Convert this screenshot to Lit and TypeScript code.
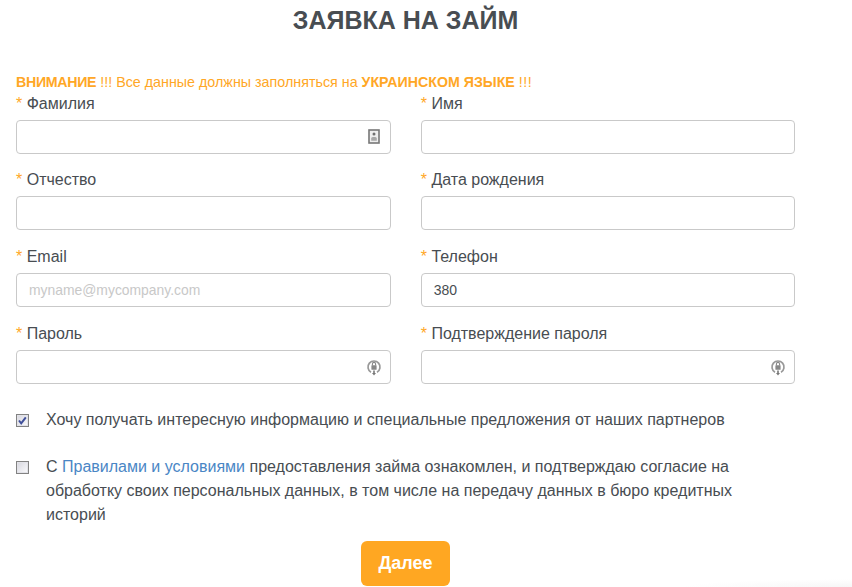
import { LitElement, html, css, svg } from "lit";
import { customElement } from "lit/decorators.js";

const cardIcon = svg`<svg class="ic card" width="12" height="15" viewBox="0 0 12 15"><rect x="1" y="1" width="10" height="13" fill="#eee" stroke="#777" stroke-width="1.6"/><circle cx="6" cy="5" r="1.5" fill="#6f6f6f"/><path d="M3.2 11.8V9.4C3.2 8.5 4.4 8 6 8s2.8.5 2.8 1.4v2.4z" fill="#a8a8a8"/></svg>`;
const lockIcon = svg`<svg class="ic" width="16" height="18" viewBox="0 0 16 18"><path d="M5 14.2A6 6 0 1 1 11 14.2" fill="none" stroke="#999" stroke-width="1.7"/><path d="M8 12.5v3.6" stroke="#777" stroke-width="1.6"/><path d="M6 15l2 2.4 2-2.4z" fill="#777"/><rect x="5.4" y="7.2" width="5.2" height="4.6" rx=".6" fill="#888"/><path d="M6.4 7.4V6a1.6 1.6 0 0 1 3.2 0v1.4" fill="none" stroke="#888" stroke-width="1.1"/></svg>`;

const fields = [
  { label: "Фамилия", icon: cardIcon },
  { label: "Имя" },
  { label: "Отчество" },
  { label: "Дата рождения" },
  { label: "Email", placeholder: "myname@mycompany.com" },
  { label: "Телефон", value: "380" },
  { label: "Пароль", icon: lockIcon },
  { label: "Подтверждение пароля", icon: lockIcon },
];

@customElement("app-root")
export class AppRoot extends LitElement {
  static styles = css`
    :host {
      display: block;
      width: 852px;
      height: 587px;
      overflow: hidden;
      background: #fff;
      font-family: "Liberation Sans", Arial, sans-serif;
      color: #484d52;
      font-size: 16px;
      position: relative;
    }
    .wrap {
      width: 779px;
      padding: 0 0 0 16px;
    }
    h1 {
      margin: 0;
      padding-top: 4px;
      height: 64px;
      box-sizing: border-box;
      font-size: 25px;
      line-height: 32px;
      font-weight: 700;
      text-align: center;
      color: #484d52;
    }
    .warn {
      margin: 0;
      padding-top: 8px;
      height: 33.6px;
      box-sizing: border-box;
      font-size: 14.3px;
      line-height: 20px;
      color: #ffa726;
    }
    .warn b { font-weight: 700; font-size: 14.2px; }
    .warn b.first { letter-spacing: -0.3px; }
    .warn .bang { letter-spacing: 0.5px; }
    .grid {
      display: grid;
      grid-template-columns: 375px 374.3px;
      column-gap: 29.7px;
      row-gap: 20.67px;
    }
    .field { display: block; }
    .lab {
      display: block;
      height: 20px;
      line-height: 20px;
      margin-bottom: 6px;
      margin-top: -4px;
      white-space: nowrap;
    }
    .star { color: #ffa726; }
    .box {
      box-sizing: border-box;
      height: 34px;
      border: 1px solid #c9c9c9;
      border-radius: 4px;
      background: #fff;
      display: flex;
      align-items: center;
      justify-content: space-between;
      padding: 0 8px 0 12px;
      font-size: 14px;
    }
    .ph { color: #c8c8c8; font-size: 13.9px; }
    .ic { display: block; margin-left: auto; }
    .card { margin-right: 2px; }
    .checks { padding-top: 24.4px; }
    .check {
      display: flex;
      align-items: flex-start;
      line-height: 24px;
      width: 730px;
    }
    .check + .check { margin-top: 23px; }
    .cb {
      flex: none;
      box-sizing: border-box;
      width: 13px;
      height: 13px;
      margin: 6px 17px 0 0;
      border: 1px solid #828282;
      background: linear-gradient(135deg, #d6d6de, #fbfbfd);
      box-shadow: inset 0 0 0 1px #e2e2e8;
      display: block;
    }
    a { color: #4a86c5; text-decoration: none; }
    .foot { display: flex; justify-content: center; padding-top: 14px; }
    .btn {
      width: 89px;
      height: 45px;
      box-sizing: border-box;
      border: 0;
      border-radius: 6px;
      background: #ffa722;
      color: #fff;
      font: 700 18px "Liberation Sans", Arial, sans-serif;
      padding: 0;
    }
    .shade {
      position: absolute;
      right: 0;
      bottom: 0;
      width: 170px;
      height: 8px;
      background: radial-gradient(ellipse at 100% 100%, #f6f6f6, rgba(255, 255, 255, 0) 70%);
    }
  `;

  render() {
    return html`
      <div class="wrap">
        <h1>ЗАЯВКА НА ЗАЙМ</h1>
        <p class="warn"><b class="first">ВНИМАНИЕ</b> !!! Все данные должны заполняться на <b>УКРАИНСКОМ ЯЗЫКЕ</b> <span class="bang">!!!</span></p>
        <div class="grid">
          ${fields.map(
            (f) => html`
              <div class="field">
                <span class="lab"><span class="star">*</span> ${f.label}</span>
                <div class="box">
                  ${f.placeholder ? html`<span class="ph">${f.placeholder}</span>` : ""}
                  ${f.value ? html`<span>${f.value}</span>` : ""}
                  ${f.icon ?? ""}
                </div>
              </div>
            `
          )}
        </div>
        <div class="checks">
          <div class="check">
            <svg class="cb" viewBox="0 0 11 11"><path d="M2 5.5l2.2 2.8 4.6-6" fill="none" stroke="#3f4f9a" stroke-width="2"/></svg>
            <span>Хочу получать интересную информацию и специальные предложения от наших партнеров</span>
          </div>
          <div class="check">
            <span class="cb"></span>
            <span>С <a>Правилами и условиями</a> предоставления займа ознакомлен, и подтверждаю согласие на обработку своих персональных данных, в том числе на передачу данных в бюро кредитных историй</span>
          </div>
        </div>
        <div class="foot"><button class="btn">Далее</button></div>
      </div>
      <div class="shade"></div>
    `;
  }
}
